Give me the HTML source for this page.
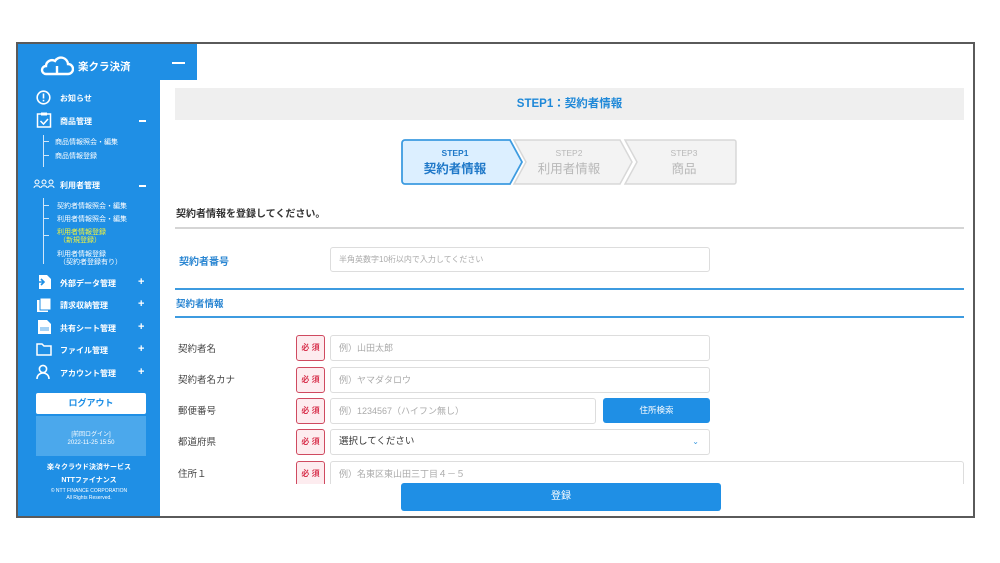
<!DOCTYPE html>
<html><head><meta charset="utf-8"><style>
*{margin:0;padding:0;box-sizing:border-box}
body{width:1000px;height:563px;background:#fff;position:relative;overflow:hidden;font-family:"Liberation Sans","Noto Sans CJK JP",sans-serif}
.a{position:absolute;white-space:nowrap}
.frame{left:16px;top:42px;width:959px;height:476px;border:2px solid #5a5a5a}
.side{left:18px;top:44px;width:142px;height:472px;background:#1f8fe5}
.mi{color:#fff;font-size:8px;font-weight:bold}
.si{color:#fff;font-size:7px}
.plus{color:#fff;font-size:11px;font-weight:bold}
.lbl{font-size:9.5px;color:#444}
.badge{width:29px;height:26px;border:1px solid #cf4a60;background:#fdecef;border-radius:3px;color:#d8344f;font-size:8px;font-weight:bold;text-align:center;line-height:24px}
.inp{height:26px;border:1px solid #ddd;border-radius:3px;background:#fff;font-size:9px;color:#aaa;padding-left:8px;line-height:24px}
</style></head><body>
<div class="a frame"></div>
<div class="a side"></div>
<div class="a" style="left:160px;top:44px;width:37px;height:36px;background:#1f8fe5"></div>
<div class="a" style="left:172px;top:62px;width:13px;height:2px;background:#fff"></div>
<svg class="a" style="left:40px;top:56px" width="34" height="20" viewBox="0 0 34 20"><path d="M6 18 H28 a5 5 0 0 0 0-10 a7 7 0 0 0-13-3 a6 6 0 0 0-9 5 a4 4 0 0 0 0 8z" fill="none" stroke="#fff" stroke-width="2.4"/><path d="M17 10v8" stroke="#fff" stroke-width="2.4"/></svg>
<div class="a" style="left:78px;top:59px;color:#fff;font-size:10.5px;font-weight:bold">楽クラ決済</div>
<svg class="a" style="left:36px;top:90px" width="15" height="15"><circle cx="7.5" cy="7.5" r="6.3" fill="none" stroke="#fff" stroke-width="1.6"/><rect x="6.7" y="3.5" width="1.6" height="5" fill="#fff"/><rect x="6.7" y="9.8" width="1.6" height="1.6" fill="#fff"/></svg>
<div class="a mi" style="left:60px;top:93px">お知らせ</div>
<svg class="a" style="left:36px;top:112px" width="16" height="16"><rect x="1.5" y="2" width="13" height="13" fill="none" stroke="#fff" stroke-width="1.5"/><rect x="5" y="0.5" width="6" height="3" fill="#fff"/><path d="M4.5 9l3 3 4.5-5" fill="none" stroke="#fff" stroke-width="1.5"/></svg>
<div class="a mi" style="left:60px;top:116px">商品管理</div>
<div class="a" style="left:139px;top:120px;width:7px;height:1.5px;background:#fff"></div>
<div class="a" style="left:43px;top:135px;width:1px;height:32px;background:#cfe6fa"></div>
<div class="a" style="left:43px;top:141px;width:6px;height:1px;background:#cfe6fa"></div>
<div class="a" style="left:43px;top:155px;width:6px;height:1px;background:#cfe6fa"></div>
<div class="a si" style="left:55px;top:137px">商品情報照会・編集</div>
<div class="a si" style="left:55px;top:151px">商品情報登録</div>
<svg class="a" style="left:33px;top:179px" width="22" height="10"><g fill="none" stroke="#fff" stroke-width="1"><circle cx="4" cy="3" r="2"/><path d="M1 9c0-3 6-3 6 0"/><circle cx="11" cy="3" r="2"/><path d="M8 9c0-3 6-3 6 0"/><circle cx="18" cy="3" r="2"/><path d="M15 9c0-3 6-3 6 0"/></g></svg>
<div class="a mi" style="left:60px;top:180px">利用者管理</div>
<div class="a" style="left:139px;top:185px;width:7px;height:1.5px;background:#fff"></div>
<div class="a" style="left:43px;top:198px;width:1px;height:66px;background:#cfe6fa"></div>
<div class="a" style="left:43px;top:205px;width:6px;height:1px;background:#cfe6fa"></div>
<div class="a" style="left:43px;top:218px;width:6px;height:1px;background:#cfe6fa"></div>
<div class="a" style="left:43px;top:235px;width:6px;height:1px;background:#cfe6fa"></div>
<div class="a si" style="left:57px;top:201px">契約者情報照会・編集</div>
<div class="a si" style="left:57px;top:214px">利用者情報照会・編集</div>
<div class="a si" style="left:57px;top:229px;color:#f4f43a;line-height:8px">利用者情報登録<br>&nbsp;（新規登録）</div>
<div class="a si" style="left:57px;top:251px;line-height:8px">利用者情報登録<br>&nbsp;（契約者登録有り）</div>
<svg class="a" style="left:36px;top:274px" width="16" height="16"><path d="M3 1h8l4 4v10H3z" fill="#fff"/><path d="M0 8h7M5 5l3 3-3 3" stroke="#1f8fe5" stroke-width="1.6" fill="none"/></svg>
<div class="a mi" style="left:60px;top:278px">外部データ管理</div>
<svg class="a" style="left:36px;top:297px" width="16" height="16"><rect x="1" y="3" width="11" height="12" fill="#fff"/><rect x="4" y="1" width="11" height="12" fill="#fff" stroke="#1f8fe5"/></svg>
<div class="a mi" style="left:60px;top:300px">請求収納管理</div>
<svg class="a" style="left:36px;top:319px" width="16" height="16"><path d="M2 1h9l4 4v10H2z" fill="#fff"/><rect x="4" y="8" width="9" height="4" fill="#1f8fe5" opacity=".4"/></svg>
<div class="a mi" style="left:60px;top:323px">共有シート管理</div>
<svg class="a" style="left:36px;top:342px" width="16" height="14"><path d="M1 2h5l2 2h7v9H1z" fill="none" stroke="#fff" stroke-width="1.5"/></svg>
<div class="a mi" style="left:60px;top:345px">ファイル管理</div>
<svg class="a" style="left:36px;top:364px" width="14" height="15"><circle cx="7" cy="5" r="3.6" fill="none" stroke="#fff" stroke-width="1.6"/><path d="M1 15c0-4 3-6 6-6s6 2 6 6" fill="none" stroke="#fff" stroke-width="1.6"/></svg>
<div class="a mi" style="left:60px;top:368px">アカウント管理</div>
<div class="a plus" style="left:138px;top:276px">+</div>
<div class="a plus" style="left:138px;top:298px">+</div>
<div class="a plus" style="left:138px;top:321px">+</div>
<div class="a plus" style="left:138px;top:343px">+</div>
<div class="a plus" style="left:138px;top:366px">+</div>
<div class="a" style="left:36px;top:393px;width:110px;height:21px;background:#fff;border-radius:2px;color:#1f8fe5;font-size:9px;font-weight:bold;text-align:center;line-height:21px">ログアウト</div>
<div class="a" style="left:36px;top:416px;width:110px;height:40px;background:#4ba8ec;color:#fff;font-size:6px;text-align:center;line-height:8px;padding-top:15px">[前回ログイン]<br>2022-11-25 15:50</div>
<div class="a" style="left:18px;top:462px;width:142px;color:#fff;font-size:7px;font-weight:bold;text-align:center">楽々クラウド決済サービス</div>
<div class="a" style="left:18px;top:475px;width:142px;color:#fff;font-size:7px;font-weight:bold;text-align:center">NTTファイナンス</div>
<div class="a" style="left:18px;top:488px;width:142px;color:#fff;font-size:5px;text-align:center;line-height:7px">© NTT FINANCE CORPORATION<br>All Rights Reserved.</div>
<div class="a" style="left:175px;top:88px;width:789px;height:32px;background:#efefef;color:#1e88d8;font-size:11.5px;font-weight:bold;text-align:center;line-height:32px">STEP1：契約者情報</div>
<svg class="a" style="left:400px;top:137px" width="340" height="50">
<path d="M225 3H334a2 2 0 0 1 2 2V45a2 2 0 0 1-2 2H225l12-22z" fill="#f3f3f3" stroke="#d8d8d8" stroke-width="1.5"/>
<path d="M114 3H220l12 22-12 22H114l12-22z" fill="#f3f3f3" stroke="#d8d8d8" stroke-width="1.5"/>
<path d="M5 3H110l12 22-12 22H5a3 3 0 0 1-3-3V6a3 3 0 0 1 3-3z" fill="#dcefff" stroke="#3d9be0" stroke-width="1.8"/>
<text x="55" y="19" font-size="8.5" font-weight="bold" fill="#1f78c8" text-anchor="middle" font-family="Liberation Sans">STEP1</text>
<text x="55" y="36" font-size="12.5" font-weight="bold" fill="#1f78c8" text-anchor="middle" font-family="Liberation Sans,Noto Sans CJK JP,sans-serif">契約者情報</text>
<text x="169" y="19" font-size="8.5" fill="#b8b8b8" text-anchor="middle" font-family="Liberation Sans">STEP2</text>
<text x="169" y="36" font-size="12.5" fill="#b8b8b8" text-anchor="middle" font-family="Liberation Sans,Noto Sans CJK JP,sans-serif">利用者情報</text>
<text x="284" y="19" font-size="8.5" fill="#b8b8b8" text-anchor="middle" font-family="Liberation Sans">STEP3</text>
<text x="284" y="36" font-size="12.5" fill="#b8b8b8" text-anchor="middle" font-family="Liberation Sans,Noto Sans CJK JP,sans-serif">商品</text>
</svg>
<div class="a" style="left:176px;top:205px;font-size:10px;color:#333;font-weight:bold">契約者情報を登録してください。</div>
<div class="a" style="left:175px;top:227px;width:789px;height:2px;background:#d5d5d5"></div>
<div class="a" style="left:179px;top:253px;font-size:10px;color:#2a86d2;font-weight:bold">契約者番号</div>
<div class="a inp" style="left:330px;top:247px;width:380px;height:25px;font-size:8px">半角英数字10桁以内で入力してください</div>
<div class="a" style="left:175px;top:288px;width:789px;height:2px;background:#3d9be0"></div>
<div class="a" style="left:176px;top:296px;font-size:9.5px;color:#2a86d2;font-weight:bold">契約者情報</div>
<div class="a" style="left:175px;top:316px;width:789px;height:2px;background:#3d9be0"></div>
<div class="a lbl" style="left:178px;top:341px">契約者名</div>
<div class="a badge" style="left:296px;top:335px">必 須</div>
<div class="a inp" style="left:330px;top:335px;width:380px">例）山田太郎</div>
<div class="a lbl" style="left:178px;top:372px">契約者名カナ</div>
<div class="a badge" style="left:296px;top:367px">必 須</div>
<div class="a inp" style="left:330px;top:367px;width:380px">例）ヤマダタロウ</div>
<div class="a lbl" style="left:178px;top:403px">郵便番号</div>
<div class="a badge" style="left:296px;top:398px">必 須</div>
<div class="a inp" style="left:330px;top:398px;width:266px">例）1234567（ハイフン無し）</div>
<div class="a" style="left:603px;top:398px;width:107px;height:25px;background:#1f8fe5;border-radius:3px;color:#fff;font-size:8.5px;text-align:center;line-height:25px">住所検索</div>
<div class="a lbl" style="left:178px;top:434px">都道府県</div>
<div class="a badge" style="left:296px;top:429px">必 須</div>
<div class="a inp" style="left:330px;top:429px;width:380px;color:#333;font-size:9.5px">選択してください<span style="position:absolute;right:10px;top:0;color:#3d9be0;font-size:8px">⌄</span></div>
<div class="a lbl" style="left:178px;top:466px">住所１</div>
<div class="a badge" style="left:296px;top:461px">必 須</div>
<div class="a inp" style="left:330px;top:461px;width:634px">例）名東区東山田三丁目４－５</div>
<div class="a" style="left:160px;top:484px;width:813px;height:32px;background:#fff"></div>
<div class="a" style="left:401px;top:483px;width:320px;height:28px;background:#1f8fe5;border-radius:3px;color:#fff;font-size:10px;text-align:center;line-height:28px">登録</div>
</body></html>
